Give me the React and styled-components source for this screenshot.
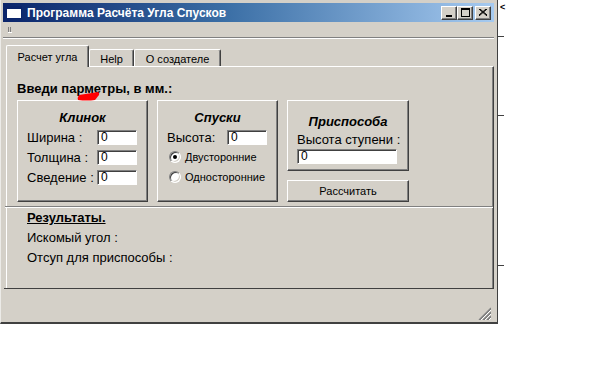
import styled, { createGlobalStyle, css } from "styled-components";

const GlobalStyle = createGlobalStyle`
  body {
    margin: 0;
    background: #ffffff;
  }
  * {
    box-sizing: border-box;
  }
`;

const raised = css`
  border: 1px solid;
  border-color: #ffffff #404040 #404040 #ffffff;
  box-shadow: inset -1px -1px 0 #808080;
`;

const sunken = css`
  border: 1px solid;
  border-color: #808080 #ffffff #ffffff #808080;
  box-shadow: inset 1px 1px 0 #404040;
`;

const Page = styled.div`
  display: flex;
  align-items: flex-start;
  font-family: "Liberation Sans", Arial, sans-serif;
  color: #000;
`;

const Window = styled.div`
  width: 498px;
  height: 324px;
  display: flex;
  flex-direction: column;
  background: #d4d0c8;
  border-left: 1px solid #ecebe8;
  border-right: 1px solid #404040;
  border-bottom: 2px solid #404040;
  padding: 3px 3px 0 2px;
`;

const TitleBar = styled.div`
  height: 19px;
  display: flex;
  align-items: center;
  gap: 5px;
  padding: 0 3px 0 3px;
  background: linear-gradient(90deg, #0a246a 0%, #3a6ea5 45%, #a6caf0 100%);
`;

const TitleText = styled.span`
  flex: 1;
  color: #ffffff;
  font-size: 12px;
  font-weight: bold;
  white-space: nowrap;
`;

const CaptionButtons = styled.div`
  display: flex;
`;

const CaptionButton = styled.div`
  ${raised};
  width: 16px;
  height: 14px;
  background: #d4d0c8;
  display: flex;
  align-items: center;
  justify-content: center;
  margin-left: ${(p) => (p.$gap ? "2px" : "0")};
`;

const MenuStrip = styled.div`
  height: 16px;
  display: flex;
  align-items: center;
  padding-left: 5px;
  border-bottom: 1px solid #808080;
  box-shadow: 0 1px 0 #ffffff;
`;

const TabsRow = styled.div`
  display: flex;
  align-items: flex-end;
  height: 27px;
  margin-top: 1px;
  padding-left: 3px;
  position: relative;
  z-index: 1;
`;

const Tab = styled.div`
  ${raised};
  border-bottom: none;
  box-shadow: inset -1px 0 0 #808080;
  width: ${(p) => p.$w}px;
  height: ${(p) => (p.$active ? 22 : 17)}px;
  margin-bottom: ${(p) => (p.$active ? "-1px" : "0")};
  background: #d4d0c8;
  font-size: 11px;
  display: flex;
  align-items: center;
  justify-content: center;
  padding-top: ${(p) => (p.$active ? "0" : "1px")};
  border-radius: 2px 2px 0 0;
`;

const Panel = styled.div`
  height: 222px;
  margin-left: 3px;
  border-top: 1px solid #ffffff;
  border-left: 1px solid #ffffff;
  border-right: 1px solid #404040;
  box-shadow: inset -1px 0 0 #808080;
  display: flex;
  flex-direction: column;
`;

const Heading = styled.div`
  position: relative;
  margin: 14px 0 0 10px;
  font-size: 13px;
  font-weight: bold;
  line-height: 15px;
`;

const RedMark = styled.svg`
  position: absolute;
  left: 60px;
  top: 9px;
`;

const GroupRow = styled.div`
  display: flex;
  align-items: flex-start;
  gap: 9px;
  margin: 4px 0 0 10px;
`;

const Group = styled.div`
  ${raised};
  width: ${(p) => p.$w}px;
  height: ${(p) => p.$h}px;
  padding: ${(p) => p.$pt}px 0 0 9px;
  display: flex;
  flex-direction: column;
  font-size: 13px;
`;

const GroupTitle = styled.div`
  font-weight: bold;
  font-style: italic;
  text-align: center;
  padding-right: 9px;
  line-height: 16px;
  margin-bottom: ${(p) => p.$mb}px;
`;

const FieldRow = styled.div`
  display: flex;
  align-items: center;
  height: 20px;
`;

const Label = styled.span`
  width: ${(p) => p.$w}px;
  white-space: nowrap;
`;

const Input = styled.div`
  ${sunken};
  width: ${(p) => p.$w}px;
  height: 15px;
  margin-top: ${(p) => p.$mt || 0}px;
  background: #ffffff;
  font-size: 12px;
  line-height: 13px;
  padding-left: 3px;
`;

const RightCol = styled.div`
  display: flex;
  flex-direction: column;
`;

const RadioRow = styled.div`
  display: flex;
  align-items: center;
  gap: 4px;
  height: 20px;
  font-size: 11px;
  padding-left: 2px;
`;

const Radio = styled.span`
  width: 12px;
  height: 12px;
  border-radius: 50%;
  background: #ffffff;
  border: 1px solid;
  border-color: #808080 #ffffff #ffffff #808080;
  box-shadow: inset 1px 1px 0 #404040, inset -1px -1px 0 #d4d0c8;
  display: flex;
  align-items: center;
  justify-content: center;
  &::after {
    content: "";
    width: 4px;
    height: 4px;
    border-radius: 50%;
    background: ${(p) => (p.$on ? "#000" : "transparent")};
  }
`;

const Button = styled.div`
  ${raised};
  width: 122px;
  height: 22px;
  margin-top: 9px;
  display: flex;
  align-items: center;
  justify-content: center;
  font-size: 11px;
`;

const Separator = styled.div`
  height: 2px;
  margin-top: 4px;
  margin-left: -2px;
  border-top: 1px solid #808080;
  border-bottom: 1px solid #ffffff;
`;

const Results = styled.div`
  display: flex;
  flex-direction: column;
  padding: 0 0 0 20px;
  font-size: 13px;
  line-height: 20px;
`;

const ResultsTitle = styled.span`
  font-weight: bold;
  text-decoration: underline;
`;

const StatusBar = styled.div`
  flex: 1;
  border-top: 1px solid #404040;
  margin-left: 1px;
  display: flex;
  justify-content: flex-end;
  align-items: flex-end;
  padding: 0 3px 2px 0;
`;

const Outside = styled.div`
  display: flex;
  flex-direction: column;
  width: 10px;
`;

const Tick = styled.div`
  width: 6px;
  height: 1px;
  background: #404040;
  margin-top: ${(p) => p.$mt}px;
`;

const Chevron = styled.span`
  font-size: 9px;
  line-height: 9px;
  margin: 3px 0 0 2px;
  font-weight: bold;
`;

function GripIcon() {
  return (
    <svg width="4" height="6" viewBox="0 0 4 6">
      <rect x="0" y="0" width="1" height="5" fill="#808080" />
      <rect x="2" y="0" width="1" height="5" fill="#808080" />
      <rect x="0" y="5" width="4" height="1" fill="#ffffff" />
    </svg>
  );
}

function ResizeGrip() {
  return (
    <svg width="13" height="13" viewBox="0 0 13 13">
      {[0, 4, 8].map((o) => (
        <g key={o}>
          <line x1={o + 1} y1="13" x2="13" y2={o + 1} stroke="#808080" strokeWidth="1.2" />
          <line x1={o + 2} y1="13" x2="13" y2={o + 2} stroke="#808080" strokeWidth="1" />
          <line x1={o + 3} y1="13" x2="13" y2={o + 3} stroke="#ffffff" strokeWidth="1" />
        </g>
      ))}
    </svg>
  );
}

export default function App() {
  return (
    <>
      <GlobalStyle />
      <Page>
        <Window>
          <TitleBar>
            <svg width="16" height="13" viewBox="0 0 16 13">
              <rect x="0.5" y="0.5" width="15" height="12" fill="#ffffff" stroke="#0a246a" />
              <rect x="1" y="1" width="14" height="2" fill="#0a246a" />
            </svg>
            <TitleText>Программа Расчёта Угла Спусков</TitleText>
            <CaptionButtons>
              <CaptionButton>
                <svg width="8" height="8" viewBox="0 0 8 8">
                  <rect x="1" y="6" width="6" height="2" fill="#000" />
                </svg>
              </CaptionButton>
              <CaptionButton>
                <svg width="9" height="9" viewBox="0 0 9 9">
                  <rect x="0.5" y="0.5" width="8" height="8" fill="none" stroke="#000" />
                  <rect x="0" y="0" width="9" height="2" fill="#000" />
                </svg>
              </CaptionButton>
              <CaptionButton $gap>
                <svg width="8" height="7" viewBox="0 0 8 7">
                  <path d="M0 0 L8 7 M1 0 L8 6 M8 0 L0 7 M7 0 L0 6" stroke="#000" strokeWidth="1" />
                </svg>
              </CaptionButton>
            </CaptionButtons>
          </TitleBar>
          <MenuStrip>
            <GripIcon />
          </MenuStrip>
          <TabsRow>
            <Tab $active $w={83}>Расчет угла</Tab>
            <Tab $w={45}>Help</Tab>
            <Tab $w={87}>О создателе</Tab>
          </TabsRow>
          <Panel>
            <Heading>
              Введи парметры, в мм.:
              <RedMark width="24" height="12" viewBox="0 0 24 12">
                <path d="M2 5 L21 2 Q23 3 22 5 L18 10 Q10 11 1 10 Q0 8 2 5 Z" fill="#ff0000" />
              </RedMark>
            </Heading>
            <GroupRow>
              <Group $w={131} $h={102} $pt={9}>
                <GroupTitle $mb={1}>Клинок</GroupTitle>
                <FieldRow>
                  <Label $w={70}>Ширина :</Label>
                  <Input $w={40}>0</Input>
                </FieldRow>
                <FieldRow>
                  <Label $w={70}>Толщина :</Label>
                  <Input $w={40}>0</Input>
                </FieldRow>
                <FieldRow>
                  <Label $w={70}>Сведение :</Label>
                  <Input $w={40}>0</Input>
                </FieldRow>
              </Group>
              <Group $w={121} $h={102} $pt={9}>
                <GroupTitle $mb={1}>Спуски</GroupTitle>
                <FieldRow>
                  <Label $w={60}>Высота:</Label>
                  <Input $w={40}>0</Input>
                </FieldRow>
                <RadioRow>
                  <Radio $on />
                  Двусторонние
                </RadioRow>
                <RadioRow>
                  <Radio />
                  Односторонние
                </RadioRow>
              </Group>
              <RightCol>
                <Group $w={122} $h={71} $pt={13}>
                  <GroupTitle $mb={2}>Приспособа</GroupTitle>
                  <Label $w={110}>Высота ступени :</Label>
                  <Input $w={100} $mt={2}>0</Input>
                </Group>
                <Button>Рассчитать</Button>
              </RightCol>
            </GroupRow>
            <Separator />
            <Results>
              <ResultsTitle>Результаты.</ResultsTitle>
              <span>Искомый угол :</span>
              <span>Отсуп для приспособы :</span>
            </Results>
          </Panel>
          <StatusBar>
            <ResizeGrip />
          </StatusBar>
        </Window>
        <Outside>
          <Chevron>&lt;</Chevron>
          <Tick $mt={24} />
          <Tick $mt={78} />
          <Tick $mt={149} />
        </Outside>
      </Page>
    </>
  );
}
